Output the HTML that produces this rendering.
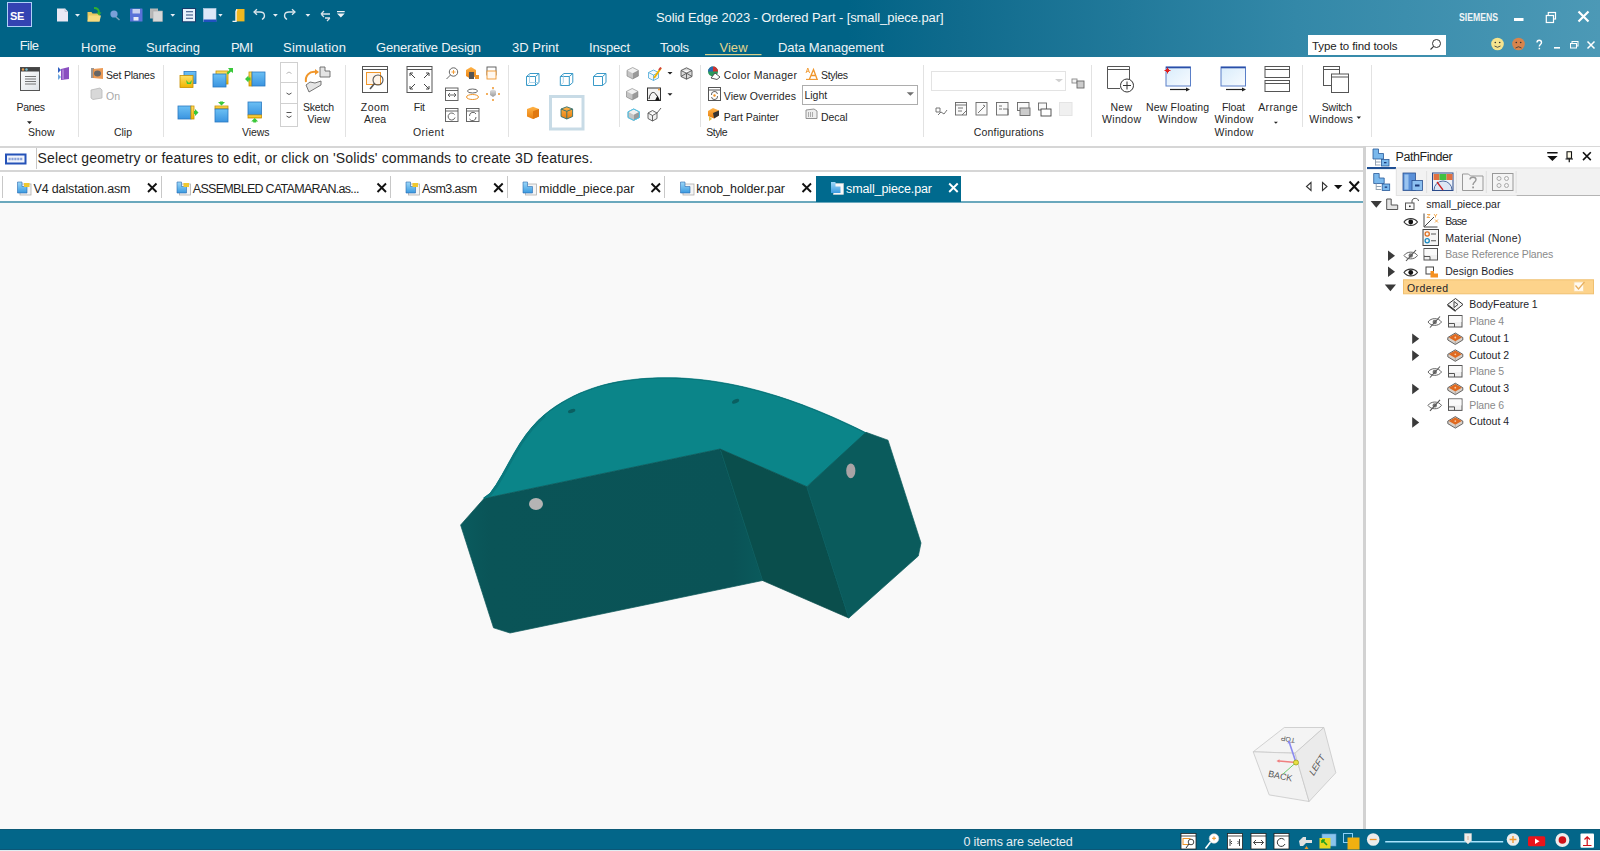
<!DOCTYPE html>
<html><head><meta charset="utf-8">
<style>
html,body{margin:0;padding:0;width:1600px;height:851px;overflow:hidden;background:#fff;font-family:"Liberation Sans",sans-serif;}
.t{position:absolute;white-space:pre;line-height:1;font-family:"Liberation Sans",sans-serif;}
.a{position:absolute;}
svg.a{overflow:visible;}
</style></head><body>
<!-- header gradient -->
<div class="a" style="left:0;top:0;width:1600px;height:57px;background:linear-gradient(90deg,#006386 0%,#006386 53%,#106b8d 60%,#3388a8 81%,#4c99b6 100%);"></div>
<!-- ribbon -->
<div class="a" style="left:0;top:57px;width:1600px;height:89px;background:#fff;"></div>
<!-- command bar -->
<div class="a" style="left:0;top:146px;width:1363px;height:26px;background:#fff;border-top:2px solid #d6d6d6;border-bottom:2px solid #d6d6d6;box-sizing:border-box;"></div>
<!-- tab bar -->
<div class="a" style="left:0;top:172px;width:1363px;height:30px;background:#fff;"></div>
<div class="a" style="left:0;top:201px;width:1363px;height:2px;background:#6aa8bd;"></div>
<!-- viewport -->
<div class="a" style="left:0;top:203px;width:1363px;height:626px;background:#f9f9f9;"></div>
<!-- splitter -->
<div class="a" style="left:1363px;top:146px;width:3px;height:683px;background:#d2d2d2;"></div>
<!-- pathfinder panel -->
<div class="a" style="left:1366px;top:146px;width:234px;height:683px;background:#fff;border-top:1px solid #d8d8d8;box-sizing:border-box;"></div>
<!-- status bar -->
<div class="a" style="left:0;top:829px;width:1600px;height:21px;background:#036689;border-top:1px solid #0c5a78;border-bottom:1px solid #0d5676;box-sizing:border-box;"></div>
<div class="a" style="left:0;top:850px;width:1600px;height:1px;background:#dfeef2;"></div>
<!-- MODEL -->
<svg class="a" style="left:0;top:0" width="1600" height="851" viewBox="0 0 1600 851">
<g stroke-width="0.7" stroke-linejoin="miter">
<path d="M483.5,498 L490.0,493.29 L496.0,484.79 L502.0,474.73 L508.0,463.91 L514.0,453.13 L520.0,443.17 L526.0,434.50 L532.0,427.01 L538.0,420.57 L544.0,415.02 L550.0,410.23 L556.0,406.03 L562.0,402.29 L568.0,398.91 L574.0,395.84 L580.0,393.09 L586.0,390.63 L592.0,388.44 L598.0,386.51 L604.0,384.82 L610.0,383.35 L616.0,382.10 L622.0,381.03 L628.0,380.14 L634.0,379.41 L640.0,378.82 L646.0,378.35 L652.0,378.01 L658.0,377.79 L664.0,377.69 L670.0,377.71 L676.0,377.84 L682.0,378.09 L688.0,378.45 L694.0,378.92 L700.0,379.50 L706.0,380.19 L712.0,380.99 L718.0,381.89 L724.0,382.90 L730.0,384.00 L736.0,385.21 L742.0,386.52 L748.0,387.92 L754.0,389.41 L760.0,391.00 L766.0,392.69 L772.0,394.46 L778.0,396.32 L784.0,398.27 L790.0,400.30 L796.0,402.41 L802.0,404.61 L808.0,406.89 L814.0,409.25 L820.0,411.68 L826.0,414.19 L832.0,416.77 L838.0,419.43 L844.0,422.15 L850.0,424.95 L856.0,427.81 L862.0,430.74 L866.5,432.97 L806.8,486.7 L720,449 L484,498.5 Z" fill="#0b8589" stroke="#0b8589"/>
<defs><linearGradient id="gff" x1="460" y1="0" x2="763" y2="0" gradientUnits="userSpaceOnUse"><stop offset="0" stop-color="#0a5b5e"/><stop offset="0.1" stop-color="#0a5457"/><stop offset="0.9" stop-color="#0a5356"/><stop offset="1" stop-color="#0a5a5c"/></linearGradient></defs>
<path d="M460.6,525 L484,498.5 L720,449 L762.5,580.5 L510,633 L493.5,627.8 Z" fill="url(#gff)" stroke="#0a5658"/>
<path d="M720,449 L806.8,486.7 L848.75,618 L762.5,580.5 Z" fill="#0a4e4c" stroke="#0a4e4c"/>
<path d="M806.8,486.7 L866,432.3 L888,440.2 L921,543 L918.3,556 L848.75,618 Z" fill="#0a5b5c" stroke="#0a5b5c"/>
</g>
<defs><clipPath id="ctop"><path d="M483.5,498 L490.0,493.29 L496.0,484.79 L502.0,474.73 L508.0,463.91 L514.0,453.13 L520.0,443.17 L526.0,434.50 L532.0,427.01 L538.0,420.57 L544.0,415.02 L550.0,410.23 L556.0,406.03 L562.0,402.29 L568.0,398.91 L574.0,395.84 L580.0,393.09 L586.0,390.63 L592.0,388.44 L598.0,386.51 L604.0,384.82 L610.0,383.35 L616.0,382.10 L622.0,381.03 L628.0,380.14 L634.0,379.41 L640.0,378.82 L646.0,378.35 L652.0,378.01 L658.0,377.79 L664.0,377.69 L670.0,377.71 L676.0,377.84 L682.0,378.09 L688.0,378.45 L694.0,378.92 L700.0,379.50 L706.0,380.19 L712.0,380.99 L718.0,381.89 L724.0,382.90 L730.0,384.00 L736.0,385.21 L742.0,386.52 L748.0,387.92 L754.0,389.41 L760.0,391.00 L766.0,392.69 L772.0,394.46 L778.0,396.32 L784.0,398.27 L790.0,400.30 L796.0,402.41 L802.0,404.61 L808.0,406.89 L814.0,409.25 L820.0,411.68 L826.0,414.19 L832.0,416.77 L838.0,419.43 L844.0,422.15 L850.0,424.95 L856.0,427.81 L862.0,430.74 L866.5,432.97 L806.8,486.7 L720,449 L484,498.5 Z"/></clipPath></defs>
<g clip-path="url(#ctop)"><path d="M483.5,498 L490.0,493.29 L496.0,484.79 L502.0,474.73 L508.0,463.91 L514.0,453.13 L520.0,443.17 L526.0,434.50 L532.0,427.01 L538.0,420.57 L544.0,415.02 L550.0,410.23 L556.0,406.03 L562.0,402.29 L568.0,398.91 L574.0,395.84 L580.0,393.09 L586.0,390.63 L592.0,388.44 L598.0,386.51 L604.0,384.82 L610.0,383.35 L616.0,382.10 L622.0,381.03 L628.0,380.14 L634.0,379.41 L640.0,378.82 L646.0,378.35 L652.0,378.01 L658.0,377.79 L664.0,377.69 L670.0,377.71 L676.0,377.84 L682.0,378.09 L688.0,378.45 L694.0,378.92 L700.0,379.50 L706.0,380.19 L712.0,380.99 L718.0,381.89 L724.0,382.90 L730.0,384.00 L736.0,385.21 L742.0,386.52 L748.0,387.92 L754.0,389.41 L760.0,391.00 L766.0,392.69 L772.0,394.46 L778.0,396.32 L784.0,398.27 L790.0,400.30 L796.0,402.41 L802.0,404.61 L808.0,406.89 L814.0,409.25 L820.0,411.68 L826.0,414.19 L832.0,416.77 L838.0,419.43 L844.0,422.15 L850.0,424.95 L856.0,427.81 L862.0,430.74 L866.5,432.97" fill="none" stroke="#0a6f74" stroke-width="1.6"/><path d="M483.5,498 L490.0,493.29 L496.0,484.79 L502.0,474.73 L508.0,463.91 L514.0,453.13 L520.0,443.17 L526.0,434.50 L532.0,427.01 L538.0,420.57 L544.0,415.02" fill="none" stroke="#0a787d" stroke-width="5"/></g>
<!-- edge lines --><path d="M720.5,450 L762.5,580.5 M807,487.5 L848.75,618" stroke="#0c6062" stroke-width="0.9" fill="none"/>
<ellipse cx="536" cy="504" rx="7" ry="6" fill="#b4b4b4"/>
<ellipse cx="850.8" cy="470.8" rx="4.6" ry="7.4" fill="#a9a3a5"/>
<ellipse cx="571.7" cy="411" rx="3.8" ry="1.9" fill="#0a5f61" transform="rotate(-18 571.7 411)"/>
<ellipse cx="735.6" cy="401.3" rx="3.8" ry="1.9" fill="#0a5f61" transform="rotate(-25 735.6 401.3)"/>
</svg>
<!-- view cube -->
<svg class="a" style="left:0;top:0" width="1600" height="851" viewBox="0 0 1600 851">
<path d="M1253.2,751.8 L1284.3,727.5 L1323.9,727.5 L1295,753.2 Z" fill="#f4f4f4" stroke="#c8c8c8" stroke-width="0.8"/>
<path d="M1253.2,751.8 L1295,753.2 L1309.1,801.5 L1269.2,794.9 Z" fill="#f2f2f2" stroke="#c8c8c8" stroke-width="0.8"/>
<path d="M1295,753.2 L1323.9,727.5 L1335.8,772.8 L1309.1,801.5 Z" fill="#ebebeb" stroke="#c8c8c8" stroke-width="0.8"/>
<text x="1268" y="779" font-family="Liberation Sans" font-size="9" fill="#555" transform="rotate(12 1280 776)">BACK</text>
<text x="-10.5" y="3.5" font-family="Liberation Sans" font-size="9" fill="#555" transform="translate(1316.5,765) rotate(-58) skewX(-14)">LEFT</text>
<text x="1281" y="743" font-family="Liberation Sans" font-size="7" fill="#555" transform="rotate(190 1288 740)">TOP</text>
<line x1="1296" y1="762.5" x2="1279" y2="761" stroke="#f08080" stroke-width="1.6"/><path d="M1276.5,761 l3,-1.8 v3.6 Z" fill="#f08080"/>
<line x1="1296" y1="762.5" x2="1289.5" y2="743" stroke="#8a8af0" stroke-width="1.6"/><path d="M1288.7,740 l-1.2,3.6 l3.6,-0.6 Z" fill="#8a8af0"/>
<line x1="1296" y1="762.5" x2="1283" y2="774" stroke="#70d070" stroke-width="1"/>
<circle cx="1296" cy="762.5" r="2.5" fill="#e8e040" stroke="#a0a020" stroke-width="0.8"/>
</svg>
<!-- active tab -->
<div class="a" style="left:816px;top:176px;width:145px;height:26px;background:#006a8e;"></div>
<!-- tab separators -->
<div class="a" style="left:2px;top:176px;width:1px;height:22px;background:#c8c8c8;"></div>
<div class="a" style="left:161px;top:176px;width:1px;height:22px;background:#c8c8c8;"></div>
<div class="a" style="left:390px;top:176px;width:1px;height:22px;background:#c8c8c8;"></div>
<div class="a" style="left:507px;top:176px;width:1px;height:22px;background:#c8c8c8;"></div>
<div class="a" style="left:664px;top:176px;width:1px;height:22px;background:#c8c8c8;"></div>
<!-- command bar separator -->
<div class="a" style="left:36px;top:148px;width:1px;height:21px;background:#c8c8c8;"></div>
<!-- search box -->
<div class="a" style="left:1308px;top:35px;width:138px;height:20px;background:#fff;"></div>
<!-- light dropdown -->
<div class="a" style="left:802px;top:85px;width:116px;height:20px;background:#fff;border:1px solid #adadad;box-sizing:border-box;"></div>
<!-- config dropdown -->
<div class="a" style="left:931px;top:71px;width:135px;height:20px;background:#fff;border:1px solid #e3e3e3;box-sizing:border-box;"></div>
<!-- pathfinder tab strip -->
<div class="a" style="left:1396px;top:168px;width:204px;height:25px;background:#f0f0f0;"></div>
<div class="a" style="left:1367px;top:167px;width:29px;height:2px;background:#1c4e9a;"></div>
<!-- ribbon separators -->
<div class="a" style="left:78px;top:65px;width:1px;height:72px;background:#e2e2e2;"></div>
<div class="a" style="left:163px;top:65px;width:1px;height:72px;background:#e2e2e2;"></div>
<div class="a" style="left:345px;top:65px;width:1px;height:72px;background:#e2e2e2;"></div>
<div class="a" style="left:508px;top:65px;width:1px;height:72px;background:#e2e2e2;"></div>
<div class="a" style="left:619px;top:65px;width:1px;height:62px;background:#e2e2e2;"></div>
<div class="a" style="left:700px;top:65px;width:1px;height:62px;background:#e2e2e2;"></div>
<div class="a" style="left:923px;top:65px;width:1px;height:72px;background:#e2e2e2;"></div>
<div class="a" style="left:1091px;top:65px;width:1px;height:72px;background:#e2e2e2;"></div>
<div class="a" style="left:1302px;top:65px;width:1px;height:62px;background:#e2e2e2;"></div>
<div class="a" style="left:1371px;top:65px;width:1px;height:72px;background:#e2e2e2;"></div>
<!-- SE logo -->
<div class="a" style="left:7px;top:2px;width:25px;height:25px;background:#3443b2;border:1px solid #b0d0f8;box-sizing:border-box;"></div>
<span class="t" style="left:10px;top:11.2px;font-size:11px;font-weight:700;color:#fff;letter-spacing:-0.4px">SE</span>
<svg class="a" style="left:0;top:0" width="1600" height="851" viewBox="0 0 1600 851">
<defs>
<linearGradient id="gwin" x1="0" y1="0" x2="1" y2="1"><stop offset="0" stop-color="#ffffff"/><stop offset="1" stop-color="#dfe3e8"/></linearGradient>
<linearGradient id="gblue" x1="0" y1="0" x2="1" y2="1"><stop offset="0" stop-color="#d8ecfb"/><stop offset="1" stop-color="#f8fbff"/></linearGradient>
<linearGradient id="gbl" x1="0" y1="0" x2="0" y2="1"><stop offset="0" stop-color="#6cc0f4"/><stop offset="1" stop-color="#3a94e0"/></linearGradient>
<linearGradient id="gye" x1="0" y1="0" x2="0" y2="1"><stop offset="0" stop-color="#ffe066"/><stop offset="1" stop-color="#f0b400"/></linearGradient>
<linearGradient id="gor" x1="0" y1="0" x2="0" y2="1"><stop offset="0" stop-color="#ffb347"/><stop offset="1" stop-color="#e87d0d"/></linearGradient>
<linearGradient id="ggr" x1="0" y1="0" x2="0" y2="1"><stop offset="0" stop-color="#e6e6e6"/><stop offset="1" stop-color="#9a9a9a"/></linearGradient>
</defs>
<!-- Panes -->
<rect x="20.5" y="67.5" width="19" height="23" fill="url(#gwin)" stroke="#555" stroke-width="1"/>
<rect x="20.5" y="67.5" width="19" height="4" fill="#444"/>
<circle cx="23" cy="69.5" r="1.2" fill="#e8a050"/><circle cx="26.5" cy="69.5" r="1.2" fill="#70c0d0"/>
<path d="M25,76.5h11M25,79h11M25,81.5h11M25,84h11" stroke="#555" stroke-width="0.8"/>
<path d="M27,121.3 L32,121.3 L29.5,124 Z" fill="#222"/>
<!-- purple -->
<path d="M61,69 L69,67 L69,79 L61,80 Z" fill="#8a4fc0"/><path d="M63,69.5 L63,79" stroke="#c9a8e8" stroke-width="1"/>
<path d="M58,67 L61,70 L58,73 Z" fill="#3060c0"/><path d="M58,74 L61,77 L58,80 Z" fill="#6fa8e0"/>
<!-- set planes -->
<rect x="91" y="68" width="3" height="10" fill="#999"/>
<path d="M93,69 L103,68 L103,79 L93,78 Z" fill="#e8893a" opacity="0.85"/>
<ellipse cx="97.5" cy="73.5" rx="3.5" ry="3" fill="#666"/>
<!-- On (gray) -->
<path d="M91,90 L100,88 L102,90 L102,98 L93,99.5 L91,98 Z" fill="#d8d8d8" stroke="#b8b8b8" stroke-width="0.8"/>
<!-- views icons -->
<g stroke-width="0.8">
<rect x="184" y="71.5" width="12" height="12" fill="url(#gbl)" stroke="#2a78c0"/>
<rect x="180" y="75.5" width="13" height="12" fill="url(#gye)" stroke="#c89000"/>
<path d="M186,80 l3,3 l3,-3 l-1,4 l-4,0 Z" fill="#3ac83a"/>
<rect x="216" y="71" width="12" height="13" fill="url(#gye)" stroke="#c89000"/>
<rect x="213" y="74" width="13" height="13" fill="url(#gbl)" stroke="#2a78c0"/>
<path d="M228,68 l5,0 l0,5 l-2,-1.5 l-3,3 l-1.5,-1.5 l3,-3 Z" fill="#3ac83a"/>
<rect x="249" y="72" width="3" height="14" fill="url(#gye)" stroke="#c89000"/>
<rect x="252" y="72" width="13" height="14" fill="url(#gbl)" stroke="#2a78c0"/>
<path d="M245,79 l3.5,-3.5 l0,2 l2,0 l0,3 l-2,0 l0,2 Z" fill="#3ac83a"/>
<rect x="178" y="106" width="13" height="13" fill="url(#gbl)" stroke="#2a78c0"/>
<rect x="191" y="106" width="3" height="13" fill="url(#gye)" stroke="#c89000"/>
<path d="M198.5,112.5 l-3.5,-3.5 l0,2 l-1,0 l0,3 l1,0 l0,2 Z" fill="#3ac83a"/>
<rect x="215" y="106" width="13" height="3" fill="url(#gye)" stroke="#c89000"/>
<rect x="215" y="109" width="13" height="13" fill="url(#gbl)" stroke="#2a78c0"/>
<path d="M221.5,105.5 l-3.5,-3.5 l2,0 l0,-0.5 l3,0 l0,0.5 l2,0 Z" fill="#3ac83a"/>
<rect x="248" y="102" width="13.5" height="13" fill="url(#gbl)" stroke="#2a78c0"/>
<rect x="248" y="115" width="13.5" height="3" fill="url(#gye)" stroke="#c89000"/>
<path d="M254.7,118 l3.5,3.5 l-2,0 l0,1 l-3,0 l0,-1 l-2,0 Z" fill="#3ac83a"/>
</g>
<!-- spin box -->
<rect x="280.5" y="62.5" width="17" height="64" fill="#fff" stroke="#d0d0d0" stroke-width="1"/>
<path d="M280.5,82.5h17M280.5,103.5h17" stroke="#d0d0d0" stroke-width="1"/>
<path d="M286.5,73.5 l2.5,-1.5 l2.5,1.5" fill="none" stroke="#b0b0b0" stroke-width="0.9"/>
<path d="M286.5,93 l2.5,1.5 l2.5,-1.5" fill="none" stroke="#555" stroke-width="1"/>
<path d="M286.5,112.5h5M286.5,116 l2.5,1.5 l2.5,-1.5" fill="none" stroke="#555" stroke-width="1"/>
<!-- sketch view -->
<path d="M320,67 l5,0 l0,4 l5,0 l0,6 l-10,0 Z" fill="#e4e4e4" stroke="#666" stroke-width="0.9"/>
<path d="M306,85 l4,-3 l5,1 l6,-2 l0,4 l-12,7 Z" fill="#e4e4e4" stroke="#666" stroke-width="0.9"/>
<path d="M306,82 C305,76 309,71 316,72" fill="none" stroke="#f0962a" stroke-width="2"/>
<path d="M315,69 l4,3 l-4,3 Z" fill="#f0962a"/>
<!-- zoom area -->
<rect x="362.5" y="66.5" width="25" height="26" fill="#fff" stroke="#555" stroke-width="1"/>
<path d="M362.5,69.5h25" stroke="#555" stroke-width="1"/>
<rect x="366.5" y="72.5" width="14" height="12" fill="#fff4e8" stroke="#f0962a" stroke-width="1"/>
<circle cx="378" cy="80" r="5" fill="none" stroke="#555" stroke-width="1.1"/>
<path d="M374.5,83.5 L370,89" stroke="#555" stroke-width="1.6"/>
<!-- fit -->
<rect x="407" y="66.5" width="25" height="26" fill="#fff" stroke="#555" stroke-width="1"/>
<path d="M407,69.5h25" stroke="#555" stroke-width="1"/>
<g stroke="#444" stroke-width="1" fill="none">
<path d="M410,73l5,5M410,73h3M410,73v3"/><path d="M429,73l-5,5M429,73h-3M429,73v3"/>
<path d="M410,89l5,-5M410,89h3M410,89v-3"/><path d="M429,89l-5,-5M429,89h-3M429,89v-3"/>
</g>
<!-- orient small icons -->
<g stroke="#555" stroke-width="0.9" fill="none">
<circle cx="453.5" cy="72" r="4.2" fill="#fff"/><path d="M450.5,75 L446.5,79"/><path d="M453.5,70v4M451.5,72h4" stroke="#f0962a"/>
<rect x="445.5" y="88" width="12.5" height="12.5" fill="#fff"/><path d="M445.5,90.5h12.5"/><path d="M448,95h8M448,95l2,-2M448,95l2,2M456,95l-2,-2M456,95l-2,2"/>
<rect x="445.5" y="108.5" width="12.5" height="13" fill="#fff"/><path d="M445.5,111h12.5"/><path d="M454.5,114.5 A3.5,3.5 0 1 0 455,117.5"/>
<rect x="466.5" y="108.5" width="12.5" height="13" fill="#fff"/><path d="M466.5,111h12.5"/><path d="M469.5,116 A3.5,3.5 0 0 1 476,114M476,117 A3.5,3.5 0 0 1 469.5,119"/>
<rect x="487" y="67" width="9" height="8" fill="#fff" stroke="#555"/><rect x="487" y="71" width="9" height="8" fill="#fff8f0" stroke="#f0962a"/>
</g>
<path d="M466,70 l5,-3 l5,3 l0,6 l-5,3 l-5,-3 Z" fill="url(#gor)"/><rect x="469" y="72" width="5" height="7" fill="#555"/><rect x="475" y="75" width="4" height="4" fill="#f0962a"/>
<ellipse cx="472.5" cy="97" rx="6" ry="2.5" fill="none" stroke="#f0962a" stroke-width="1"/><ellipse cx="472.5" cy="91" rx="5" ry="2" fill="none" stroke="#666" stroke-width="1"/>
<path d="M490,91 l3,-2 l3,2 l0,4 l-3,2 l-3,-2 Z" fill="url(#ggr)"/><circle cx="493" cy="88" r="1" fill="#f0962a"/><circle cx="493" cy="100" r="1" fill="#f0962a"/><circle cx="487" cy="94" r="1" fill="#f0962a"/><circle cx="499" cy="94" r="1" fill="#f0962a"/>
<!-- wireframe cubes -->
<use href="#wcube" x="526" y="73"/>
<use href="#wcube" x="559.8" y="73"/>
<use href="#wcube" x="593" y="73"/>
<path d="M529.5,73.5 V82.5 H539 M529.5,82.5 L526.5,85.5" fill="none" stroke="#9ccbe4" stroke-width="0.8"/>
<path d="M563.3,73.5 V82.5 M563.3,82.5 L560.3,85.5" fill="none" stroke="#9ccbe4" stroke-width="0.8"/>
<path d="M527,109 L533,106.8 L539,109 L539,116.5 L533,119 L527,116.5 Z" fill="url(#gor)"/><path d="M533,111.3 L539,109 V116.5 L533,119 Z" fill="#e07810"/>
<rect x="550.5" y="96.5" width="32.5" height="32.5" fill="#fff" stroke="#c8dbe6" stroke-width="3"/>
<path d="M561,109 L566.8,106.8 L572.6,109 L572.6,116.5 L566.8,119 L561,116.5 Z" fill="url(#gor)" stroke="#2f6f70" stroke-width="0.9"/>
<path d="M561,109 L566.8,111.3 L572.6,109 M566.8,111.3 V119" fill="none" stroke="#2f6f70" stroke-width="0.9"/>
<!-- gray shade cubes -->
<defs>
<g id="gcube"><path d="M0,3 L6,0 L12,3 L6,6 Z" fill="#f0f0f0"/><path d="M0,3 L6,6 L6,12 L0,9 Z" fill="#c4c4c4"/><path d="M6,6 L12,3 L12,9 L6,12 Z" fill="#9a9a9a"/><path d="M0,3 L6,0 L12,3 L12,9 L6,12 L0,9 Z" fill="none" stroke="#777" stroke-width="0.6"/></g>
<g id="wcube" fill="none" stroke="#3a9ac8" stroke-width="1"><path d="M0.5,3.5 L4,0.5 H13 V9.5 L9.5,12.5 H0.5 Z M0.5,3.5 H9.5 V12.5 M9.5,3.5 L13,0.5"/></g>
</defs>
<use href="#gcube" transform="translate(627,67.5) scale(0.95)"/>
<use href="#gcube" transform="translate(626.5,88.5) scale(0.95)"/>
<use href="#gcube" transform="translate(628,109) scale(0.95)"/>
<path d="M628,111.8 L633.7,109 L639.4,111.8 L639.4,117.5 L633.7,120.4 L628,117.5 Z" fill="none" stroke="#4ac8f0" stroke-width="1"/>
<path d="M648.5,72.5 L653.5,70 L658.5,72.5 L658.5,78 L653.5,80.5 L648.5,78 Z M648.5,72.5 L653.5,75 L658.5,72.5 M653.5,75 V80.5" fill="#eef6fb" stroke="#4aa8d8" stroke-width="0.8"/>
<path d="M681,70.5 L686.5,67.8 L692,70.5 L692,76.5 L686.5,79.2 L681,76.5 Z M681,70.5 L686.5,73.2 L692,70.5 M686.5,73.2 V79.2 M681,76.5 L686.5,73.2 L692,76.5" fill="#d8d8d8" stroke="#555" stroke-width="0.9"/>
<path d="M648,113 L652.5,110.5 L657,113 L657,118.5 L652.5,121 L648,118.5 Z M648,113 L652.5,115.5 L657,113 M652.5,115.5 V121" fill="#f0f0f0" stroke="#555" stroke-width="0.9"/>
<path d="M654,78 l7,-10" stroke="#f0b400" stroke-width="2"/><path d="M659,70 l2,-2.5" stroke="#d04040" stroke-width="2"/>
<path d="M667.5,72 h5 l-2.5,2.5 Z M667.5,93.2 h5 l-2.5,2.5 Z" fill="#222"/>
<path d="M657,113 l4,-5" stroke="#666" stroke-width="1"/>
<rect x="647.5" y="88" width="13" height="12.5" fill="#f4f4f4" stroke="#333" stroke-width="1"/>
<path d="M649,99 C650,92 654,90 657,96" fill="none" stroke="#333" stroke-width="1"/><path d="M655,100.5 l2.5,-5 l2.5,5 Z" fill="#111"/><circle cx="659" cy="89.5" r="1" fill="#f0962a"/>
<!-- color manager -->
<circle cx="713" cy="71.5" r="5" fill="#2a9a5a"/><path d="M713,66.5 A5,5 0 0 1 718,71.5 L713,71.5 Z" fill="#d03030"/><path d="M708,71.5 A5,5 0 0 1 713,66.5 L713,71.5Z" fill="#2a6ab0"/>
<path d="M711,78 l4,-5 l5,4 l-3,2.5 Z" fill="#fff" stroke="#444" stroke-width="0.9"/>
<!-- view overrides -->
<rect x="708.5" y="87.5" width="12" height="13" fill="#fff" stroke="#555" stroke-width="1"/><path d="M708.5,90h12" stroke="#555"/>
<path d="M711.5,95 A3,3 0 0 1 717.5,94M717.5,96 A3,3 0 0 1 711.5,97" fill="none" stroke="#555" stroke-width="0.9"/><circle cx="714.5" cy="95.5" r="1.2" fill="#f0962a"/>
<!-- part painter -->
<path d="M708,111 l5,-3 l6,2.5 l0,5 l-5,3 l-6,-2.5 Z" fill="url(#gor)"/><path d="M713,113 l6,-2.5 l0,5 l-5,3 Z" fill="#333"/><path d="M709,116 l0,5 l3,-2 Z" fill="#e0c050"/>
<!-- styles -->
<path d="M806,73 l1.8,-5 l1.8,5 M806.7,71.3h2.2" fill="none" stroke="#f0962a" stroke-width="0.9"/><path d="M809.5,79 l4,-9.5 l3.5,9.5 M811.2,75.5h4.3" fill="none" stroke="#f0962a" stroke-width="1.3"/><path d="M806,79.4h12" stroke="#f0962a" stroke-width="1.1"/>
<!-- light dropdown arrow -->
<path d="M906.7,92.2 h7.3 l-3.65,3.5 Z" fill="#707070"/>
<!-- decal -->
<path d="M806,110 l8,-1 l3,2 l0,7.5 l-11,0 Z" fill="#eee" stroke="#888" stroke-width="0.9"/><path d="M808.5,112v5M810.5,112v5M812.5,112v5" stroke="#999" stroke-width="0.8"/>
<!-- config dropdown arrow -->
<path d="M1055,79 h8 l-4,3.3 Z" fill="#d0d0d0"/>
<g stroke="#888" stroke-width="0.9" fill="#f4f4f4">
<rect x="1072" y="79" width="5" height="4"/><rect x="1077" y="81" width="7" height="7" fill="#ccc" stroke="#666"/>
</g>
<g stroke="#666" stroke-width="0.9" fill="#fafafa">
<path d="M936,108 h4 v4 h-4 Z M938,115 l3,-3 l3,2 l3,-4" fill="none"/>
<rect x="955.5" y="102.5" width="11" height="12.5"/><path d="M955.5,105h11M958,108h5M958,111h4M962,115 l5,-5" fill="none"/>
<rect x="976" y="102.5" width="11" height="12.5"/><path d="M978,113 l7,-7M983,105l2,1" fill="none"/>
<rect x="996.5" y="102.5" width="11.5" height="12.5"/><path d="M999,106h3M999,109h3M1003,109h5v6" fill="none"/>
<rect x="1017.5" y="102.5" width="11.5" height="8"/><rect x="1020" y="108" width="10" height="7.5" fill="#ccc"/>
<rect x="1038.5" y="103" width="8" height="7"/><rect x="1041" y="109" width="10" height="7" fill="#fff" stroke="#444"/>
</g>
<rect x="1059.5" y="102.5" width="12.5" height="13" fill="#f0f0f0" stroke="#e4e4e4" stroke-width="1"/>
<!-- new window -->
<path d="M1107.5,88.5 V66.5 H1129.5 V81" fill="#fff" stroke="#555" stroke-width="1"/><path d="M1107.5,69.5h22" stroke="#555" stroke-width="1"/>
<path d="M1107.5,88.5 H1120" stroke="#555" stroke-width="1"/>
<circle cx="1127" cy="85.5" r="6.5" fill="#fff" stroke="#333" stroke-width="1"/><path d="M1127,81.5v8M1123,85.5h8" stroke="#333" stroke-width="1"/>
<!-- new floating window -->
<rect x="1166" y="67" width="24.5" height="19" fill="url(#gblue)" stroke="#5a7fc8" stroke-width="1"/><path d="M1166,67.5h24.5" stroke="#2a4fa8" stroke-width="1.6"/>
<path d="M1170,89.5 h17" stroke="#222" stroke-width="1.2"/><path d="M1186,87.5 l4,2 l-4,2 Z" fill="#222"/>
<path d="M1166,69 l3,3 M1169,69 l-3,3 M1164.5,70.5h6 M1167.5,67.5v6" stroke="#e02020" stroke-width="1"/>
<!-- float window -->
<rect x="1221" y="67" width="24.5" height="19" fill="url(#gblue)" stroke="#5a7fc8" stroke-width="1"/><path d="M1221,67.5h24.5" stroke="#2a4fa8" stroke-width="1.6"/>
<path d="M1226,89.5 h17" stroke="#222" stroke-width="1.2"/><path d="M1242,87.5 l4,2 l-4,2 Z" fill="#222"/>
<!-- arrange -->
<rect x="1265" y="66.5" width="24.5" height="11" fill="#fff" stroke="#555" stroke-width="1"/><path d="M1265,69.5h24.5" stroke="#555"/>
<rect x="1265" y="80.5" width="24.5" height="11" fill="#fff" stroke="#555" stroke-width="1"/><path d="M1265,83.5h24.5" stroke="#555"/>
<path d="M1273.9,121.8 h4 l-2,2 Z" fill="#222"/>
<!-- switch windows -->
<rect x="1323.5" y="66.5" width="16" height="19" fill="#fff" stroke="#555" stroke-width="1"/><path d="M1323.5,69.5h16" stroke="#555"/>
<rect x="1331.5" y="74" width="17" height="18.5" fill="#fff" stroke="#555" stroke-width="1"/><path d="M1331.5,77h17" stroke="#555"/>
<path d="M1356.6,116.5 h4.4 l-2.2,2.5 Z" fill="#222"/>
</svg>
<svg class="a" style="left:0;top:0" width="1600" height="60" viewBox="0 0 1600 60">
<!-- new doc -->
<path d="M57,8.5 h8 l3,3 v10 h-11 Z" fill="#eae8f4"/><path d="M65,8.5 v3 h3" fill="none" stroke="#b8b8c8" stroke-width="0.7"/>
<path d="M75,14 h5 l-2.5,2.8 Z" fill="#e8eef4"/>
<!-- open folder -->
<path d="M87.5,12 h4 l1,1.5 h7 v8 h-12 Z" fill="#e8c860"/><path d="M89,15.5 h12 l-1.5,6 h-12 Z" fill="#f6dc80"/>
<path d="M94,8 C97,8 99,10 99,13" fill="none" stroke="#30b030" stroke-width="1.8"/><path d="M96.5,12.5 h5 l-2.5,3 Z" fill="#30b030"/>
<!-- globe/search -->
<circle cx="114" cy="14" r="3.6" fill="#7aa0d8"/><path d="M116,17 l3.5,3" stroke="#7aa0b8" stroke-width="1.5"/>
<!-- save -->
<rect x="130" y="8.5" width="12.5" height="13" fill="#5a72d8" rx="0.5"/><rect x="132.5" y="9" width="7.5" height="4.5" fill="#c8d0f0"/><rect x="133.5" y="17" width="5" height="3.5" fill="#e8ecf8"/>
<!-- copy gray -->
<rect x="150" y="8.5" width="8" height="10" fill="#b8b8b8"/><rect x="153" y="11" width="9.5" height="10.5" fill="#d8d8d8" stroke="#a8a8a8" stroke-width="0.6"/>
<path d="M170.4,14 h4.7 l-2.35,2.8 Z" fill="#e8eef4"/>
<!-- list -->
<rect x="182.5" y="8.5" width="13" height="13.3" fill="#e8f2fc" stroke="#1a3a6a" stroke-width="1"/>
<path d="M186,11.8 h7M186,15 h7M186,18.2 h7" stroke="#2a4a7a" stroke-width="1.1"/>
<!-- icon with dropdown -->
<rect x="203.5" y="8.5" width="12.5" height="13" fill="#dde8f8" stroke="#c0d0e8" stroke-width="0.6"/><rect x="203.5" y="19.5" width="13" height="2.5" fill="#2050c0"/>
<path d="M218.3,14 h4.3 l-2.15,2.7 Z" fill="#e8eef4"/>
<!-- door -->
<rect x="236" y="9" width="8.5" height="12.4" fill="#f0b820"/><path d="M232.5,21.4 h3.5 v-10 l1,-2" fill="none" stroke="#f4f4f4" stroke-width="1.4"/>
<!-- undo/redo -->
<path d="M262,19.5 C266,17 265,12 260,12 h-5.5" fill="none" stroke="#dde6ec" stroke-width="1.3"/><path d="M257,9.2 l-3,2.8 l3,2.8" fill="none" stroke="#dde6ec" stroke-width="1.3"/>
<path d="M273,14 h4.8 l-2.4,2.7 Z" fill="#e8eef4"/>
<path d="M287,19.5 C283,17 284,12 289,12 h5.5" fill="none" stroke="#dde6ec" stroke-width="1.3"/><path d="M292,9.2 l3,2.8 l-3,2.8" fill="none" stroke="#dde6ec" stroke-width="1.3"/>
<path d="M305.5,14 h4.8 l-2.4,2.7 Z" fill="#e8eef4"/>
<path d="M321,14 h9 M321,14 l3,-3 M321,14 l3,3 M325,18 h5 M330,18 l-3,3" fill="none" stroke="#d8e2ea" stroke-width="1.3"/>
<path d="M337,11 h7.7 v1.3 h-7.7 Z M337,13.6 h7.7 l-3.85,3.9 Z" fill="#eef2f6"/>
<!-- window controls -->
<rect x="1514" y="18" width="9.5" height="3" fill="#fff"/>
<rect x="1548.3" y="12.5" width="7.2" height="6.5" fill="none" stroke="#fff" stroke-width="1.2"/>
<rect x="1546.3" y="15.5" width="7.2" height="7" fill="#4d97b4" stroke="#fff" stroke-width="1.2"/>
<path d="M1578.5,11.5 L1588.5,21.5 M1588.5,11.5 L1578.5,21.5" stroke="#fff" stroke-width="2.2"/>
<!-- search icon -->
<circle cx="1436.5" cy="43.5" r="4" fill="none" stroke="#333" stroke-width="1"/><path d="M1433.7,46.3 L1430.5,49.5" stroke="#333" stroke-width="1.1"/>
<!-- smileys -->
<circle cx="1497.5" cy="44" r="6.3" fill="#f6e48e"/><circle cx="1495.3" cy="42.5" r="0.8" fill="#333"/><circle cx="1499.7" cy="42.5" r="0.8" fill="#333"/><path d="M1494.5,46 Q1497.5,48.5 1500.5,46" fill="none" stroke="#333" stroke-width="0.8"/>
<circle cx="1518.5" cy="44" r="6.3" fill="#d8844c"/><circle cx="1516.3" cy="42.5" r="0.8" fill="#333"/><circle cx="1520.7" cy="42.5" r="0.8" fill="#333"/><path d="M1515.5,48 Q1518.5,45.5 1521.5,48" fill="none" stroke="#333" stroke-width="0.8"/>
<path d="M1537,42.5 C1537,39.5 1541.5,39.5 1541.5,42.5 C1541.5,44.5 1539.3,44.5 1539.3,46.5" fill="none" stroke="#fff" stroke-width="1.4"/><rect x="1538.6" y="47.8" width="1.5" height="1.5" fill="#fff"/>
<rect x="1554" y="47" width="6" height="1.6" fill="#fff"/>
<rect x="1572" y="41.5" width="6" height="4.5" fill="none" stroke="#fff" stroke-width="1"/><rect x="1570.5" y="43.5" width="6" height="4.5" fill="#5aa0bc" stroke="#fff" stroke-width="1"/>
<path d="M1587.5,41.5 L1594.5,48.5 M1594.5,41.5 L1587.5,48.5" stroke="#fff" stroke-width="1.5"/>
<!-- View underline -->
<rect x="705" y="54" width="56.5" height="1.2" fill="#d8cf8a"/>
</svg>
<svg class="a" style="left:0;top:140" width="1600" height="70" viewBox="0 140 1600 70">
<defs>
<linearGradient id="gtb" x1="0" y1="0" x2="0" y2="1"><stop offset="0" stop-color="#9ed8f8"/><stop offset="1" stop-color="#3a9ae0"/></linearGradient>
</defs>
<!-- command bar icon -->
<rect x="6" y="154.5" width="19.5" height="9" fill="#f2f5fc" stroke="#2552b8" stroke-width="2"/>
<path d="M8.5,159 h14.5" stroke="#8aa2d8" stroke-width="2.6" stroke-dasharray="2.2,0.7"/>
<!-- asm icons -->
<g id="asmi">
<rect x="20" y="184" width="11" height="11" fill="#f4f4f4" stroke="#b0b0b0" stroke-width="0.8"/>
<path d="M17.5,182 h4.5 v4.5 h5 v6.5 h-9.5 Z" fill="url(#gtb)" stroke="#2a6ab0" stroke-width="0.6"/>
<rect x="24" y="183" width="5.5" height="4" fill="#f0c830"/>
</g>
<use href="#asmi" x="159.5"/>
<use href="#asmi" x="388.5"/>
<!-- par icons -->
<g id="pari">
<rect x="525.5" y="184" width="11" height="11" fill="#f4f4f4" stroke="#b0b0b0" stroke-width="0.8"/>
<path d="M523,182 h4.5 v4.5 h5 v6.5 h-9.5 Z" fill="url(#gtb)" stroke="#2a6ab0" stroke-width="0.6"/>
</g>
<use href="#pari" x="157.5"/>
<rect x="833.5" y="183.5" width="10" height="11" fill="#f8f8f8" stroke="#d0d0d0" stroke-width="0.6"/>
<path d="M831,182 h4.5 v4.5 h5 v6.5 h-9.5 Z" fill="url(#gtb)"/>
<!-- close X -->
<g stroke="#111" stroke-width="1.9">
<path d="M148,183.5 l8.5,8.5 M156.5,183.5 l-8.5,8.5"/>
<path d="M377.5,183.5 l8.5,8.5 M386,183.5 l-8.5,8.5"/>
<path d="M494.2,183.5 l8.5,8.5 M502.7,183.5 l-8.5,8.5"/>
<path d="M651.5,183.5 l8.5,8.5 M660,183.5 l-8.5,8.5"/>
<path d="M802.5,183.5 l8.5,8.5 M811,183.5 l-8.5,8.5"/>
</g>
<path d="M949.2,183.5 l8.5,8.5 M957.7,183.5 l-8.5,8.5" stroke="#fff" stroke-width="1.9"/>
<!-- tab nav -->
<path d="M1311,182.5 L1306.5,186.5 L1311,190.5 Z" fill="none" stroke="#333" stroke-width="1.1"/>
<path d="M1322.5,182.5 L1327,186.5 L1322.5,190.5 Z" fill="none" stroke="#333" stroke-width="1.1"/>
<path d="M1334,185 h8.4 l-4.2,4.3 Z" fill="#111"/>
<path d="M1349.5,181.5 l9.5,10 M1359,181.5 l-9.5,10" stroke="#111" stroke-width="2"/>
<!-- pathfinder header icon -->
<g id="pfi">
<path d="M1373,149 h5.5 v4.5 h5 v5.5 h-10.5 Z" fill="#7ab8ec" stroke="#2a5a9a" stroke-width="0.8"/>
<path d="M1375.5,159 v6.5 M1375.5,162 h5 M1375.5,165 h5" stroke="#8a9aaa" stroke-width="0.9" fill="none"/>
<rect x="1381.5" y="159.5" width="7.5" height="6.5" fill="#7ab8ec" stroke="#2a5a9a" stroke-width="0.8"/>
<rect x="1384" y="162" width="2.5" height="1.3" fill="#1a3a7a"/>
</g>
<rect x="1367" y="167.5" width="29" height="1.6" fill="#1f4f8f"/>
<!-- tab strip -->
<rect x="1396.3" y="167.5" width="204" height="28" fill="#f2f2f2"/>
<path d="M1396.3,196 V168 H1600" fill="none" stroke="#e2e2e2" stroke-width="1"/>
<path d="M1396.3,195.5 H1516.5" stroke="#e2e2e2" stroke-width="1"/><path d="M1516.5,195.5 H1600" stroke="#b4b4b4" stroke-width="1.2"/>
<use href="#pfi" x="0.7" y="24.5"/>
<!-- icon2 -->
<rect x="1403" y="173" width="12.5" height="17.5" fill="#5a90d8" stroke="#2a5090" stroke-width="0.8"/>
<rect x="1404.5" y="174.5" width="4" height="15" fill="#9ac4f0"/>
<rect x="1412" y="180.5" width="10.5" height="10" fill="#8cc0f0" stroke="#2a5090" stroke-width="0.8"/>
<rect x="1415" y="184.5" width="4.5" height="2" fill="#1a3a7a"/>
<path d="M1426.6,171 v22" stroke="#e0e0e0" stroke-width="1"/>
<!-- gauge -->
<rect x="1432.5" y="173" width="20.5" height="17.5" fill="#eef2f8" stroke="#2a4a8a" stroke-width="1"/>
<rect x="1433.5" y="174" width="6" height="6" fill="#e07040"/><rect x="1439.5" y="174" width="7" height="6" fill="#40c040"/><rect x="1446.5" y="174" width="6" height="6" fill="#e07040"/>
<path d="M1434,190 A9,9 0 0 1 1452,190" fill="#dde6f4" stroke="#2a4a8a" stroke-width="0.8"/>
<path d="M1443,190 L1437,182" stroke="#d02020" stroke-width="1.3"/>
<path d="M1456.5,171 v22" stroke="#e0e0e0" stroke-width="1"/>
<!-- folder ? -->
<path d="M1462.5,190.5 V174 h6 l2,2 h12.5 v14.5 Z" fill="#f4f4f4" stroke="#999" stroke-width="1"/>
<path d="M1470,179.5 C1470,176.5 1476,176.5 1476,179.5 C1476,182 1473,182 1473,185" fill="none" stroke="#999" stroke-width="1.4"/><rect x="1472.2" y="186.5" width="1.8" height="1.8" fill="#999"/>
<path d="M1486.3,171 v22" stroke="#e0e0e0" stroke-width="1"/>
<!-- grid -->
<rect x="1492.5" y="173.5" width="20.5" height="17" fill="#f4f4f4" stroke="#999" stroke-width="1"/>
<circle cx="1499" cy="178.5" r="2" fill="none" stroke="#aaa"/><circle cx="1506.5" cy="178.5" r="2" fill="none" stroke="#aaa"/><circle cx="1499" cy="185.5" r="2" fill="none" stroke="#aaa"/><circle cx="1506.5" cy="185.5" r="2" fill="none" stroke="#aaa"/>
<path d="M1516.1,171 v22" stroke="#e0e0e0" stroke-width="1"/>
<!-- pathfinder right controls -->
<path d="M1547.2,152 h10.4 v1.5 h-10.4 Z M1547.2,156 h10.4 l-5.2,5 Z" fill="#111"/>
<path d="M1567,151.8 h4.5 v6.5 h-4.5 Z" fill="#fffbe8" stroke="#111" stroke-width="1.1"/><path d="M1565.5,159 h7.5 M1569.25,159 v3.2" stroke="#111" stroke-width="1.2" fill="none"/>
<path d="M1583,152.3 l7.8,7.8 M1590.8,152.3 l-7.8,7.8" stroke="#111" stroke-width="1.6"/>
</svg>
<svg class="a" style="left:1366px;top:196px" width="234" height="240" viewBox="1366 196 234 240">
<defs>
<g id="eye"><path d="M0,4.5 C3,0 10.5,0 13.5,4.5 C10.5,9 3,9 0,4.5 Z" fill="#fff" stroke="#333" stroke-width="1.1"/><circle cx="6.75" cy="4.5" r="2.4" fill="#111"/></g>
<g id="eyeh"><path d="M0,4.5 C3,0 10.5,0 13.5,4.5 C10.5,9 3,9 0,4.5 Z" fill="#fff" stroke="#666" stroke-width="1"/><circle cx="6.75" cy="4.5" r="2.2" fill="#777"/><path d="M2,10 L12,-1" stroke="#555" stroke-width="1.1"/></g>
<g id="plane"><rect x="0.5" y="0.5" width="13.5" height="11.5" fill="#f0f0f0" stroke="#555" stroke-width="1"/><rect x="1" y="1" width="12.5" height="6" fill="#fafafa"/><path d="M0.5,8.5 h6 v3.5" fill="none" stroke="#555" stroke-width="1"/></g>
<g id="cut"><path d="M0.5,6.5 L8,2 L15.5,6.5 L15.5,9 L8,13.5 L0.5,9 Z" fill="#d8d0c8" stroke="#555" stroke-width="0.9"/><path d="M1.5,6.5 L8,2.8 L14.5,6.5 L8,10.2 Z" fill="#e06a20"/><path d="M8,10.2 V13.5" stroke="#999" stroke-width="0.7"/><circle cx="8" cy="6.5" r="0.9" fill="#f8c8a0"/></g>
<path id="tri" d="M0,0 L7,5.3 L0,10.6 Z" fill="#3a3a3a"/>
</defs>
<!-- row0 -->
<path d="M1370.7,201 h11.2 l-5.6,6.8 Z" fill="#3a3a3a"/>
<path d="M1386.7,199 h4.5 v6 h6.5 v4.5 h-11 Z" fill="#e4e4e4" stroke="#555" stroke-width="1"/>
<rect x="1405.5" y="203" width="8.5" height="6.5" fill="#fafafa" stroke="#555" stroke-width="1"/><rect x="1409" y="205.5" width="1.6" height="1.6" fill="#333"/>
<path d="M1412,203 V201 C1412,197.5 1418.5,197.5 1418.5,201" fill="none" stroke="#555" stroke-width="1"/>
<!-- row1 Base -->
<use href="#eye" x="1404" y="217.5"/>
<path d="M1424,213.5 v13.5 h13.5" fill="none" stroke="#333" stroke-width="0.9"/><path d="M1424.5,226.5 L1434,217" stroke="#333" stroke-width="0.9"/>
<path d="M1427,214.5 h3 l-3,3 h3 M1434,214 l1.5,2 l1.5,-2 M1435.5,216 v1.5 M1435,219.5 l3,3 M1438,219.5 l-3,3" fill="none" stroke="#f0962a" stroke-width="0.8"/>
<!-- row2 Material -->
<rect x="1423" y="229.5" width="15.5" height="16" fill="#f4f4f4" stroke="#444" stroke-width="1"/>
<circle cx="1427.2" cy="234" r="2.1" fill="none" stroke="#e07020" stroke-width="1.3"/><circle cx="1427.2" cy="240.8" r="2.1" fill="none" stroke="#1a8ac0" stroke-width="1.3"/>
<path d="M1431,234 h5 M1431,240.8 h5" stroke="#555" stroke-width="1.1"/>
<!-- row3 Base ref planes -->
<use href="#tri" x="1388" y="250.5"/>
<use href="#eyeh" x="1404" y="251"/>
<use href="#plane" x="1423.5" y="248"/>
<!-- row4 design bodies -->
<use href="#tri" x="1388" y="266.5"/>
<use href="#eye" x="1404" y="268"/>
<rect x="1426" y="267" width="7.5" height="7" fill="#fff" stroke="#444" stroke-width="1"/>
<path d="M1430.5,271 h3.5 v2.5 h4 v4 h-7.5 Z" fill="#f59020"/>
<!-- row5 ordered -->
<path d="M1384.8,284.5 h11.2 l-5.6,6.8 Z" fill="#3a3a3a"/>
<rect x="1403.5" y="279.8" width="190" height="14" fill="#fdd38b" stroke="#f0c070" stroke-width="1"/>
<rect x="1574" y="282" width="9.5" height="9.3" fill="#fffaf0" stroke="#f8d8a0" stroke-width="0.8"/>
<path d="M1575.5,285.5 l3,3.5 l6,-7" fill="none" stroke="#e8b060" stroke-width="1.3"/>
<!-- row6 bodyfeature -->
<path d="M1447.5,304.5 L1455.5,298.5 L1463,304.5 L1455.5,310.5 Z" fill="#f4f4f4" stroke="#333" stroke-width="1"/>
<path d="M1447.5,304.5 L1447.5,306 L1455.5,312 L1455.5,310.5 Z" fill="#333"/>
<path d="M1454,301.5 L1458,304.5 L1454,307.5 Z" fill="none" stroke="#333" stroke-width="0.9"/>
<!-- row7 plane4 -->
<use href="#eyeh" x="1428" y="317.5"/>
<use href="#plane" x="1448" y="315"/>
<!-- row8 cutout1 -->
<use href="#tri" x="1412.2" y="333.5"/>
<use href="#cut" x="1447.3" y="331"/>
<!-- row9 cutout2 -->
<use href="#tri" x="1412.2" y="350.3"/>
<use href="#cut" x="1447.3" y="347.8"/>
<!-- row10 plane5 -->
<use href="#eyeh" x="1428" y="367.5"/>
<use href="#plane" x="1448" y="365"/>
<!-- row11 cutout3 -->
<use href="#tri" x="1412.2" y="383.7"/>
<use href="#cut" x="1447.3" y="381.2"/>
<!-- row12 plane6 -->
<use href="#eyeh" x="1428" y="400.9"/>
<use href="#plane" x="1448" y="398.4"/>
<!-- row13 cutout4 -->
<use href="#tri" x="1412.2" y="417.1"/>
<use href="#cut" x="1447.3" y="414.6"/>
</svg>
<svg class="a" style="left:1170px;top:826px" width="430" height="25" viewBox="1170 826 430 25">
<g stroke="#222" stroke-width="0.8">
<rect x="1181" y="833.5" width="15" height="15.5" fill="#fff"/><path d="M1181,836 h15"/>
<rect x="1227.5" y="833.5" width="15" height="15.5" fill="#fff"/><path d="M1227.5,836 h15"/>
<rect x="1251" y="833.5" width="15" height="15.5" fill="#fff"/><path d="M1251,836 h15"/>
<rect x="1274" y="833.5" width="15" height="15.5" fill="#fff"/><path d="M1274,836 h15"/>
</g>
<rect x="1183" y="838.5" width="7" height="6" fill="none" stroke="#f0962a" stroke-width="1"/><circle cx="1191" cy="842" r="2.8" fill="#fff" stroke="#333" stroke-width="0.9"/><path d="M1189,844 l-3,4" stroke="#333" stroke-width="1"/>
<circle cx="1214" cy="838.5" r="4.8" fill="#fff" stroke="#ccc" stroke-width="0.6"/><path d="M1214,836.3 v4 M1212,838.3 h4" stroke="#f0962a" stroke-width="1"/><path d="M1210.5,842 l-5,6.5" stroke="#fff" stroke-width="1.6"/>
<path d="M1230,839 v7 M1239.5,839 v7 M1232,841 l-1.5,1.5 l1.5,1.5 M1237.5,841 l1.5,1.5 l-1.5,1.5" fill="none" stroke="#333" stroke-width="0.9"/>
<path d="M1253.5,842.5 h10 M1253.5,842.5 l2.5,-2.5 M1253.5,842.5 l2.5,2.5 M1263.5,842.5 l-2.5,-2.5 M1263.5,842.5 l-2.5,2.5" fill="none" stroke="#333" stroke-width="0.9"/>
<path d="M1284.5,840 A4,4 0 1 0 1285,844" fill="none" stroke="#333" stroke-width="1"/>
<path d="M1299,841 l4,-4 l3,0 l0,3 l6,0 l0,3 l-6,0 l-3,3 l-3,0 Z" fill="#e0e0e0"/><path d="M1304.5,849 l2,-3 l2,3 Z" fill="#f0962a"/>
<rect x="1322" y="834" width="14" height="12" fill="#8ac4ec" stroke="#5a9ad0" stroke-width="0.6"/><rect x="1319.5" y="838" width="11" height="10.5" fill="#e8d820"/><path d="M1322,840 l5,5 M1322,840 h3 M1322,840 v3" stroke="#20a020" stroke-width="1.6"/>
<rect x="1343.5" y="833.5" width="9" height="9" fill="none" stroke="#8ad0f8" stroke-width="1"/><rect x="1347.5" y="837.5" width="12" height="12" fill="#f0b010"/>
<circle cx="1373.2" cy="839.5" r="6.3" fill="#ececec"/><path d="M1369.8,839.5 h6.8" stroke="#f0962a" stroke-width="1.3"/>
<path d="M1385.2,841.7 h118" stroke="#a8e2fc" stroke-width="1.4"/>
<path d="M1464.5,833.5 h7 v7 l-3.5,3.5 l-3.5,-3.5 Z" fill="#f0ece8" stroke="#ccc" stroke-width="0.5"/><path d="M1468,836 v4" stroke="#d0a080" stroke-width="0.8"/>
<circle cx="1513" cy="839.5" r="6.3" fill="#ececec"/><path d="M1509.6,839.5 h6.8 M1513,836.1 v6.8" stroke="#f0962a" stroke-width="1.3"/>
<rect x="1528" y="836.2" width="17.2" height="10" rx="1.5" fill="#e8141c"/><path d="M1535,838.5 l4.5,2.7 l-4.5,2.7 Z" fill="#fff"/>
<circle cx="1562.4" cy="840" r="7" fill="#ededed"/><circle cx="1562.4" cy="840" r="3.8" fill="#d01018"/>
<rect x="1580.5" y="833.5" width="13.5" height="14.2" rx="1" fill="#fff"/><path d="M1587.2,845 v-8 M1584.5,839.5 l2.7,-2.7 l2.7,2.7 M1583,845.5 h8.5" fill="none" stroke="#d01018" stroke-width="1.2"/>
</svg>

<span class="t" style="left:656.0px;top:10.6px;font-size:13px;color:#f2f6f8;letter-spacing:-0.09px;">Solid Edge 2023 - Ordered Part - [small_piece.par]</span>
<span class="t" style="left:1458.5px;top:11.7px;font-size:10.5px;color:#f0f4f6;transform:scaleX(0.825);transform-origin:0 0;font-weight:700;">SIEMENS</span>
<span class="t" style="left:19.7px;top:39.0px;font-size:13px;color:#eef3f6;letter-spacing:-0.55px;">File</span>
<span class="t" style="left:81.0px;top:40.6px;font-size:13px;color:#eef3f6;letter-spacing:0.10px;">Home</span>
<span class="t" style="left:146.0px;top:40.6px;font-size:13px;color:#eef3f6;letter-spacing:-0.12px;">Surfacing</span>
<span class="t" style="left:231.0px;top:40.6px;font-size:13px;color:#eef3f6;letter-spacing:-0.56px;">PMI</span>
<span class="t" style="left:283.0px;top:40.6px;font-size:13px;color:#eef3f6;letter-spacing:0.26px;">Simulation</span>
<span class="t" style="left:376.0px;top:40.6px;font-size:13px;color:#eef3f6;letter-spacing:-0.17px;">Generative Design</span>
<span class="t" style="left:512.0px;top:40.6px;font-size:13px;color:#eef3f6;letter-spacing:0.00px;">3D Print</span>
<span class="t" style="left:589.0px;top:40.6px;font-size:13px;color:#eef3f6;letter-spacing:-0.15px;">Inspect</span>
<span class="t" style="left:660.0px;top:40.6px;font-size:13px;color:#eef3f6;letter-spacing:-0.34px;">Tools</span>
<span class="t" style="left:719.4px;top:40.6px;font-size:13px;color:#e3d58c;letter-spacing:0.08px;">View</span>
<span class="t" style="left:778.0px;top:40.6px;font-size:13px;color:#eef3f6;letter-spacing:-0.07px;">Data Management</span>
<span class="t" style="left:1312.0px;top:40.5px;font-size:11.5px;color:#222;letter-spacing:-0.09px;">Type to find tools</span>
<span class="t" style="left:16.5px;top:102.1px;font-size:10.5px;color:#262626;letter-spacing:-0.32px;">Panes</span>
<span class="t" style="left:28.0px;top:127.1px;font-size:10.5px;color:#262626;letter-spacing:0.08px;">Show</span>
<span class="t" style="left:106.0px;top:69.9px;font-size:10.5px;color:#262626;letter-spacing:-0.20px;">Set Planes</span>
<span class="t" style="left:106.0px;top:90.6px;font-size:10.5px;color:#a8a8a8;letter-spacing:-0.02px;">On</span>
<span class="t" style="left:114.0px;top:127.1px;font-size:10.5px;color:#262626;letter-spacing:-0.03px;">Clip</span>
<span class="t" style="left:242.0px;top:127.1px;font-size:10.5px;color:#262626;letter-spacing:-0.08px;">Views</span>
<span class="t" style="left:303.0px;top:102.1px;font-size:10.5px;color:#262626;letter-spacing:-0.22px;">Sketch</span>
<span class="t" style="left:307.5px;top:113.6px;font-size:10.5px;color:#262626;letter-spacing:-0.03px;">View</span>
<span class="t" style="left:360.8px;top:102.1px;font-size:10.5px;color:#262626;letter-spacing:0.45px;">Zoom</span>
<span class="t" style="left:364.0px;top:113.6px;font-size:10.5px;color:#262626;letter-spacing:-0.06px;">Area</span>
<span class="t" style="left:413.8px;top:102.1px;font-size:10.5px;color:#262626;letter-spacing:-0.24px;">Fit</span>
<span class="t" style="left:413.0px;top:127.1px;font-size:10.5px;color:#262626;letter-spacing:0.44px;">Orient</span>
<span class="t" style="left:723.8px;top:70.1px;font-size:10.5px;color:#262626;letter-spacing:0.31px;">Color Manager</span>
<span class="t" style="left:723.8px;top:91.1px;font-size:10.5px;color:#262626;letter-spacing:0.09px;">View Overrides</span>
<span class="t" style="left:723.8px;top:112.1px;font-size:10.5px;color:#262626;letter-spacing:-0.04px;">Part Painter</span>
<span class="t" style="left:706.3px;top:127.1px;font-size:10.5px;color:#262626;letter-spacing:-0.54px;">Style</span>
<span class="t" style="left:821.0px;top:70.1px;font-size:10.5px;color:#262626;letter-spacing:-0.32px;">Styles</span>
<span class="t" style="left:804.4px;top:90.0px;font-size:10.5px;color:#262626;letter-spacing:0.03px;">Light</span>
<span class="t" style="left:821.0px;top:112.1px;font-size:10.5px;color:#262626;letter-spacing:-0.09px;">Decal</span>
<span class="t" style="left:973.8px;top:127.1px;font-size:10.5px;color:#262626;letter-spacing:0.18px;">Configurations</span>
<span class="t" style="left:1110.5px;top:102.1px;font-size:10.5px;color:#262626;letter-spacing:0.24px;">New</span>
<span class="t" style="left:1102.0px;top:113.6px;font-size:10.5px;color:#262626;letter-spacing:0.33px;">Window</span>
<span class="t" style="left:1146.0px;top:102.1px;font-size:10.5px;color:#262626;letter-spacing:0.16px;">New Floating</span>
<span class="t" style="left:1158.0px;top:113.6px;font-size:10.5px;color:#262626;letter-spacing:0.33px;">Window</span>
<span class="t" style="left:1222.0px;top:102.1px;font-size:10.5px;color:#262626;letter-spacing:-0.09px;">Float</span>
<span class="t" style="left:1214.5px;top:113.6px;font-size:10.5px;color:#262626;letter-spacing:0.29px;">Window</span>
<span class="t" style="left:1214.5px;top:127.1px;font-size:10.5px;color:#262626;letter-spacing:0.29px;">Window</span>
<span class="t" style="left:1258.3px;top:102.1px;font-size:10.5px;color:#262626;letter-spacing:0.31px;">Arrange</span>
<span class="t" style="left:1321.8px;top:102.1px;font-size:10.5px;color:#262626;letter-spacing:-0.19px;">Switch</span>
<span class="t" style="left:1309.3px;top:113.6px;font-size:10.5px;color:#262626;letter-spacing:0.18px;">Windows</span>
<span class="t" style="left:37.5px;top:150.9px;font-size:14px;color:#1e1e1e;letter-spacing:0.14px;">Select geometry or features to edit, or click on 'Solids' commands to create 3D features.</span>
<span class="t" style="left:33.5px;top:182.6px;font-size:12.5px;color:#1e1e1e;letter-spacing:-0.15px;">V4 dalstation.asm</span>
<span class="t" style="left:192.8px;top:182.6px;font-size:12.5px;color:#1e1e1e;letter-spacing:-0.71px;">ASSEMBLED CATAMARAN.as...</span>
<span class="t" style="left:421.9px;top:182.6px;font-size:12.5px;color:#1e1e1e;letter-spacing:-0.54px;">Asm3.asm</span>
<span class="t" style="left:539.0px;top:182.6px;font-size:12.5px;color:#1e1e1e;letter-spacing:0.01px;">middle_piece.par</span>
<span class="t" style="left:696.3px;top:182.6px;font-size:12.5px;color:#1e1e1e;letter-spacing:-0.07px;">knob_holder.par</span>
<span class="t" style="left:846.0px;top:182.6px;font-size:12.5px;color:#ffffff;letter-spacing:-0.11px;">small_piece.par</span>
<span class="t" style="left:1395.6px;top:151.2px;font-size:12.5px;color:#1e1e1e;letter-spacing:-0.46px;">PathFinder</span>
<span class="t" style="left:1426.3px;top:199.3px;font-size:10.5px;color:#1e1e2a;letter-spacing:0.04px;">small_piece.par</span>
<span class="t" style="left:1445.2px;top:215.9px;font-size:10.5px;color:#1e1e2a;letter-spacing:-0.65px;">Base</span>
<span class="t" style="left:1445.2px;top:232.5px;font-size:10.5px;color:#1e1e2a;letter-spacing:0.27px;">Material (None)</span>
<span class="t" style="left:1445.2px;top:249.1px;font-size:10.5px;color:#8a8a8a;letter-spacing:-0.11px;">Base Reference Planes</span>
<span class="t" style="left:1445.2px;top:265.7px;font-size:10.5px;color:#1e1e2a;letter-spacing:0.06px;">Design Bodies</span>
<span class="t" style="left:1407.0px;top:282.5px;font-size:10.5px;color:#1e1e2a;letter-spacing:0.43px;">Ordered</span>
<span class="t" style="left:1469.3px;top:299.3px;font-size:10.5px;color:#1e1e2a;letter-spacing:-0.04px;">BodyFeature 1</span>
<span class="t" style="left:1469.3px;top:316.1px;font-size:10.5px;color:#8a8a8a;letter-spacing:-0.15px;">Plane 4</span>
<span class="t" style="left:1469.3px;top:332.7px;font-size:10.5px;color:#1e1e2a;letter-spacing:0.03px;">Cutout 1</span>
<span class="t" style="left:1469.3px;top:349.5px;font-size:10.5px;color:#1e1e2a;letter-spacing:0.03px;">Cutout 2</span>
<span class="t" style="left:1469.3px;top:366.1px;font-size:10.5px;color:#8a8a8a;letter-spacing:-0.15px;">Plane 5</span>
<span class="t" style="left:1469.3px;top:382.9px;font-size:10.5px;color:#1e1e2a;letter-spacing:0.03px;">Cutout 3</span>
<span class="t" style="left:1469.3px;top:399.7px;font-size:10.5px;color:#8a8a8a;letter-spacing:-0.15px;">Plane 6</span>
<span class="t" style="left:1469.3px;top:416.4px;font-size:10.5px;color:#1e1e2a;letter-spacing:0.03px;">Cutout 4</span>
<span class="t" style="left:963.4px;top:836.2px;font-size:12.5px;color:#e8eef2;letter-spacing:-0.13px;">0 items are selected</span>
</body></html>
